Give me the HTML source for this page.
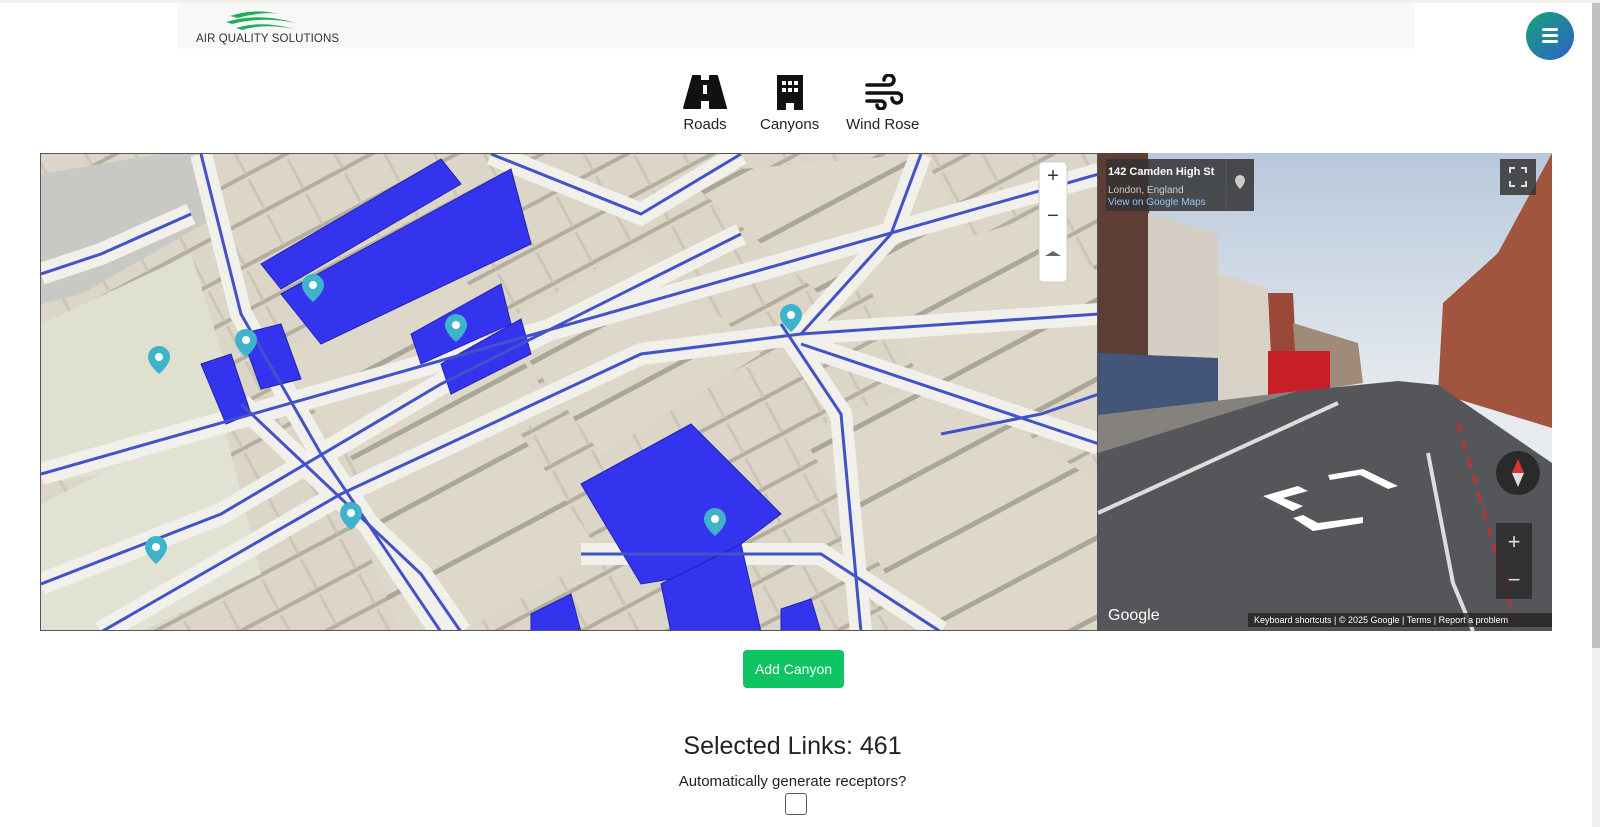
<!DOCTYPE html>
<html><head><meta charset="utf-8">
<style>
*{box-sizing:border-box;margin:0;padding:0}
body{width:1600px;height:827px;overflow:hidden;background:#fff;font-family:"Liberation Sans",sans-serif;position:relative}
.topline{position:absolute;left:0;top:0;width:1600px;height:3px;background:#f1f1e8}
.hdr{position:absolute;left:177px;top:3px;width:1238px;height:46px;background:#f8f8f8}
.logo{position:absolute;left:196px;top:33px;font-size:11.5px;color:#333;letter-spacing:0.1px}
.menu{position:absolute;left:1526px;top:12px;width:48px;height:48px;border-radius:50%;background:linear-gradient(135deg,#17a37a,#3060c8)}
.menu i{position:absolute;left:16px;width:16px;height:3px;background:#fff;border-radius:2px}
.scroll{position:absolute;left:1592px;top:3px;width:8px;height:824px;background:#f0f0f0}
.scroll div{position:absolute;left:0;top:0;width:8px;height:645px;background:#c1c1c1}
.tool{position:absolute;top:74px;text-align:center;font-size:15px;color:#222}
.tool span{display:block;margin-top:2px}
.map{position:absolute;left:40px;top:153px;width:1058px;height:478px;border:1px solid #555;overflow:hidden;background:#e9e6dc}
.sv{position:absolute;left:1098px;top:153px;width:454px;height:478px;overflow:hidden}
.btn{position:absolute;left:743px;top:650px;width:101px;height:38px;background:#0fc463;color:#fff;font-size:14px;border-radius:4px;text-align:center;line-height:38px}
h2{position:absolute;left:0;width:1585px;top:732px;text-align:center;font-weight:normal;font-size:25px;color:#222}
.q{position:absolute;left:0;width:1585px;top:773px;text-align:center;font-size:15px;color:#222}
.cb{position:absolute;left:785px;top:793px;width:22px;height:22px;border:1.5px solid #555;border-radius:3px}
</style></head><body>
<div class="topline"></div>
<div class="hdr"></div>
<svg style="position:absolute;left:224px;top:10px" width="80" height="22" viewBox="0 0 80 22"><path d="M6 6 Q30 -2 55 4 Q40 1 14 8Z M2 12 Q35 2 72 13 Q40 6 8 14Z M12 18 Q38 10 70 19 Q40 13 18 20Z" fill="#1fae5a"/></svg>
<div class="logo">AIR QUALITY SOLUTIONS</div>
<div class="menu"><i style="top:16px"></i><i style="top:22px"></i><i style="top:28px"></i></div>
<div class="scroll"><div></div></div>

<div class="tool" style="left:683px"><svg width="44" height="36" viewBox="0 0 44 36"><path d="M10 2h7v5h10V2h7l9 32H27v-8H17v8H1Z" fill="#111" stroke="#111" stroke-width="2" stroke-linejoin="round"/><rect x="20" y="11" width="4" height="9" fill="#fff"/></svg><span>Roads</span></div>
<div class="tool" style="left:760px"><svg width="36" height="36" viewBox="0 0 36 36"><path d="M5 1h26v35H22v-7h-8v7H5Z" fill="#111"/><g fill="#fff"><rect x="10" y="7" width="4" height="4"/><rect x="16" y="7" width="4" height="4"/><rect x="22" y="7" width="4" height="4"/><rect x="10" y="14" width="4" height="4"/><rect x="16" y="14" width="4" height="4"/><rect x="22" y="14" width="4" height="4"/></g></svg><span>Canyons</span></div>
<div class="tool" style="left:846px"><svg width="40" height="36" viewBox="0 0 40 36" fill="none" stroke="#111" stroke-width="3.5" stroke-linecap="round"><path d="M4 11h22a5 5 0 1 0-5-5"/><path d="M4 19h30a5 5 0 1 1-5 5"/><path d="M4 27h14a4 4 0 1 1-4 4"/></svg><span>Wind Rose</span></div>

<div class="map"><svg width="1058" height="478" viewBox="0 0 1058 478">
<defs>
<pattern id="bl" width="44" height="40" patternUnits="userSpaceOnUse" patternTransform="rotate(-28)">
<rect width="44" height="40" fill="#dbd6c7"/><rect x="0" y="33" width="44" height="4" fill="#b3ae9f"/><rect x="38" y="0" width="3" height="34" fill="#cbc6b6"/>
</pattern>
<pattern id="bl2" width="80" height="70" patternUnits="userSpaceOnUse" patternTransform="rotate(-28)">
<rect width="80" height="70" fill="#ddd8ca"/><rect x="0" y="62" width="80" height="5" fill="#aaa698"/>
</pattern>
</defs>
<rect width="1058" height="478" fill="url(#bl)"/>
<path d="M0 20 L120 0 L170 0 L180 60 L40 140 L0 150Z" fill="#c8c8c4"/>
<path d="M0 170 L150 100 L200 260 L60 320 L0 330Z" fill="#e0e0d0"/>
<path d="M0 350 L180 260 L220 420 L100 478 L0 478Z" fill="#e2e2d4"/>
<g fill="url(#bl2)">
<path d="M230 200 L420 120 L520 260 L330 330Z"/>
<path d="M300 330 L460 250 L560 400 L420 478 L360 478Z"/>
<path d="M460 170 L600 90 L720 200 L560 300Z"/>
<path d="M640 20 L880 0 L930 80 L790 150Z"/>
<path d="M760 280 L900 220 L1058 330 L1058 478 L880 478Z"/>
<path d="M820 120 L1000 60 L1058 120 L1058 280 L900 260Z"/>
</g>
<g fill="none" stroke="#f2f0ea" stroke-width="22">
<path d="M0 320 L1058 20"/><path d="M0 430 L180 360 L400 230 L600 130 L700 80"/>
<path d="M60 478 L300 340 L600 200 L760 180 L1058 160"/>
<path d="M160 0 L200 160 L280 300 L400 478"/>
<path d="M740 170 L800 260 L820 478"/>
<path d="M450 0 L600 60 L700 0"/>
<path d="M760 190 L1058 290"/>
<path d="M880 0 L850 80 L760 180"/>
<path d="M200 250 L380 420 L420 478"/>
<path d="M540 400 L780 400 L900 478"/>
<path d="M0 120 L60 100 L150 60"/>
</g>
<g fill="#3434ee" stroke="#2222b0" stroke-width="1">
<path d="M220 110 L400 5 L420 30 L240 135Z"/>
<path d="M240 140 L470 15 L490 90 L280 190Z"/>
<path d="M370 180 L460 130 L470 170 L380 210Z"/>
<path d="M400 210 L480 165 L490 200 L410 240Z"/>
<path d="M160 210 L190 200 L210 260 L185 270Z"/>
<path d="M200 180 L240 170 L260 225 L220 235Z"/>
<path d="M540 330 L650 270 L740 360 L660 420 L600 430Z"/>
<path d="M620 430 L700 390 L720 478 L630 478Z"/>
<path d="M490 460 L530 440 L540 478 L490 478Z"/>
<path d="M740 455 L770 445 L780 478 L740 478Z"/>
</g>
<g fill="none" stroke="#4252c8" stroke-width="3">
<path d="M0 320 L1058 20"/><path d="M0 430 L180 360 L400 230 L600 130 L700 80"/>
<path d="M60 478 L300 340 L600 200 L760 180 L1058 160"/>
<path d="M160 0 L200 160 L280 300 L400 478"/>
<path d="M740 170 L800 260 L820 478"/>
<path d="M450 0 L600 60 L700 0"/>
<path d="M760 190 L1058 290"/>
<path d="M880 0 L850 80 L760 180"/>
<path d="M900 280 L1000 260 L1058 240"/>
<path d="M200 250 L380 420 L420 478"/>
<path d="M540 400 L780 400 L900 478"/>
<path d="M0 120 L60 100 L150 60"/>
</g>
<g fill="#3fb3cc">
<g transform="translate(272,120)"><path d="M0 0a11 11 0 0 1 11 11c0 8-11 17-11 17s-11-9-11-17a11 11 0 0 1 11-11z"/><circle cy="11" r="4" fill="#fff"/></g>
<g transform="translate(205,175)"><path d="M0 0a11 11 0 0 1 11 11c0 8-11 17-11 17s-11-9-11-17a11 11 0 0 1 11-11z"/><circle cy="11" r="4" fill="#fff"/></g>
<g transform="translate(118,192)"><path d="M0 0a11 11 0 0 1 11 11c0 8-11 17-11 17s-11-9-11-17a11 11 0 0 1 11-11z"/><circle cy="11" r="4" fill="#fff"/></g>
<g transform="translate(415,160)"><path d="M0 0a11 11 0 0 1 11 11c0 8-11 17-11 17s-11-9-11-17a11 11 0 0 1 11-11z"/><circle cy="11" r="4" fill="#fff"/></g>
<g transform="translate(750,150)"><path d="M0 0a11 11 0 0 1 11 11c0 8-11 17-11 17s-11-9-11-17a11 11 0 0 1 11-11z"/><circle cy="11" r="4" fill="#fff"/></g>
<g transform="translate(310,348)"><path d="M0 0a11 11 0 0 1 11 11c0 8-11 17-11 17s-11-9-11-17a11 11 0 0 1 11-11z"/><circle cy="11" r="4" fill="#fff"/></g>
<g transform="translate(115,382)"><path d="M0 0a11 11 0 0 1 11 11c0 8-11 17-11 17s-11-9-11-17a11 11 0 0 1 11-11z"/><circle cy="11" r="4" fill="#fff"/></g>
<g transform="translate(674,354)"><path d="M0 0a11 11 0 0 1 11 11c0 8-11 17-11 17s-11-9-11-17a11 11 0 0 1 11-11z"/><circle cy="11" r="4" fill="#fff"/></g>
</g>
<rect x="998" y="8" width="28" height="120" rx="4" fill="#fff" stroke="#ccc"/>
<text x="1012" y="28" font-size="20" text-anchor="middle" font-family="Liberation Sans" fill="#333">+</text>
<text x="1012" y="68" font-size="20" text-anchor="middle" font-family="Liberation Sans" fill="#333">−</text>
<path d="M1004 102 L1020 102 L1012 97Z" fill="#666"/>
</svg></div>

<div class="sv"><svg width="454" height="478" viewBox="0 0 454 478">
<defs><linearGradient id="sk" x1="0" y1="0" x2="0" y2="1"><stop offset="0" stop-color="#b8c8dc"/><stop offset="0.5" stop-color="#e6eaee"/><stop offset="1" stop-color="#f0f0f0"/></linearGradient></defs>
<rect width="454" height="478" fill="url(#sk)"/>
<path d="M0 0 L50 0 L55 260 L0 270Z" fill="#5e3e34"/>
<path d="M50 60 L120 80 L120 250 L50 262Z" fill="#d4cec4"/>
<path d="M120 120 L170 135 L175 245 L120 250Z" fill="#d8d2c6"/>
<path d="M170 140 L195 140 L200 240 L175 245Z" fill="#9a4838"/>
<path d="M195 170 L260 190 L265 230 L200 240Z" fill="#a08a78"/>
<path d="M0 200 L120 205 L120 250 L0 262Z" fill="#44557a"/>
<rect x="170" y="198" width="62" height="52" fill="#c81e28"/>
<path d="M454 0 L400 100 L345 150 L340 240 L454 275Z" fill="#a2553e"/>
<path d="M0 262 L230 235 L300 228 L340 232 L454 310 L454 478 L0 478Z" fill="#55565a"/>
<path d="M0 262 L200 238 L0 300Z" fill="#85827e"/>
<path d="M0 360 L240 250" stroke="#ddd" stroke-width="4"/>
<path d="M330 300 L355 430 L375 478" stroke="#ddd" stroke-width="4" fill="none"/>
<path d="M360 270 L420 478" stroke="#c03030" stroke-width="3" stroke-dasharray="10 8" fill="none"/>
<path d="M200 333 L165 343 L195 358 L205 353 L185 345 L210 338Z M230 322 L265 316 L300 333 L290 336 L262 322 L232 327Z M195 365 L215 378 L265 370 L265 364 L220 370 L205 362Z" fill="#fff"/>
<rect x="8" y="6" width="148" height="52" fill="#333" opacity="0.85"/>
<line x1="128" y1="6" x2="128" y2="58" stroke="#555"/>
<text x="10" y="22" font-size="11" font-weight="bold" fill="#fff" font-family="Liberation Sans">142 Camden High St</text>
<text x="10" y="40" font-size="10" fill="#ccc" font-family="Liberation Sans">London, England</text>
<text x="10" y="52" font-size="10" fill="#9cc3f5" font-family="Liberation Sans">View on Google Maps</text>
<path d="M142 22a5 5 0 0 1 5 5c0 4-5 9-5 9s-5-5-5-9a5 5 0 0 1 5-5z" fill="#ccc"/>
<rect x="402" y="6" width="36" height="36" fill="#333" opacity="0.85"/>
<path d="M412 20v-5h5 M428 20v-5h-5 M412 28v5h5 M428 28v5h-5" stroke="#ddd" stroke-width="2" fill="none"/>
<circle cx="420" cy="320" r="22" fill="#222" opacity="0.85"/>
<path d="M420 306 L426 320 L414 320Z" fill="#d33"/><path d="M420 334 L426 320 L414 320Z" fill="#ddd"/>
<rect x="398" y="370" width="36" height="76" fill="#222" opacity="0.7"/>
<text x="416" y="396" font-size="22" text-anchor="middle" fill="#ddd" font-family="Liberation Sans">+</text>
<text x="416" y="434" font-size="22" text-anchor="middle" fill="#ddd" font-family="Liberation Sans">−</text>
<text x="10" y="467" font-size="16" fill="#fff" font-family="Liberation Sans">Google</text>
<rect x="150" y="460" width="304" height="14" fill="#222" opacity="0.8"/>
<text x="156" y="470" font-size="9" fill="#fff" font-family="Liberation Sans">Keyboard shortcuts | © 2025 Google | Terms | Report a problem</text>
</svg></div>

<div class="btn">Add Canyon</div>
<h2>Selected Links: 461</h2>
<div class="q">Automatically generate receptors?</div>
<div class="cb"></div>
</body></html>
